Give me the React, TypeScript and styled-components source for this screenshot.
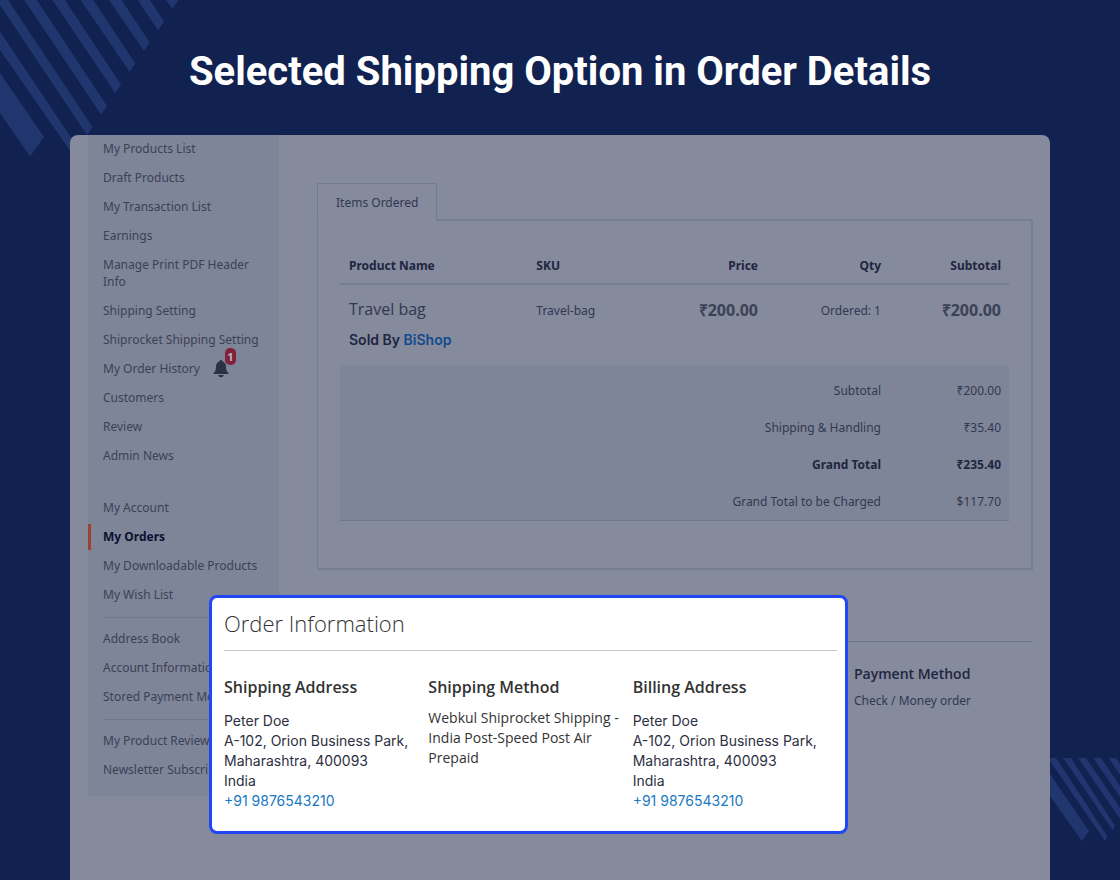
import React from "react";
import styled, { createGlobalStyle, css } from "styled-components";

const GlobalStyle = createGlobalStyle`
  *, *::before, *::after { box-sizing: border-box; }
  body {
    margin: 0;
    background: #112150;
    font-family: "Noto Sans", "Open Sans", sans-serif;
    font-size: 12px;
    line-height: 17px;
  }
  h1, h2, h3, p, ul, address { margin: 0; padding: 0; font-style: normal; }
  ul { list-style: none; }
  a { text-decoration: none; color: inherit; }
`;

const Page = styled.div`
  position: relative;
  display: flex;
  flex-direction: column;
  min-height: 100vh;
  overflow: hidden;
`;

const Stripes = styled.svg<{ $corner: "top" | "bottom" }>`
  position: absolute;
  fill: #21366f;
  ${({ $corner }) =>
    $corner === "top"
      ? css`top: 0; left: 0;`
      : css`bottom: 38px; right: 0;`}
`;

const Title = styled.h1`
  position: relative;
  padding: 48px 24px 39px;
  color: #fff;
  font: 700 40px/48px Roboto, sans-serif;
  text-align: center;
`;

const Panel = styled.main`
  position: relative;
  flex: 1;
  display: flex;
  align-items: flex-start;
  gap: 38px;
  margin: 0 70px;
  padding: 0 17px 84px 18px;
  border-radius: 8px 8px 0 0;
  background: #858a9d;
  color: #323850;
`;

const Sidebar = styled.nav`
  flex: 0 0 191px;
  padding-bottom: 11px;
  background: #7f8598;
`;

const NavList = styled.ul<{ $spaced?: boolean }>`
  margin-top: ${({ $spaced }) => ($spaced ? 23 : 0)}px;
`;

const NavItem = styled.li<{ $active?: boolean }>`
  display: flex;
  align-items: center;
  padding: 5px 15px 7px 12px;
  border-left: 3px solid transparent;
  color: #3b4157;
  ${({ $active }) =>
    $active &&
    css`
      margin: 1px 0 2px;
      padding-top: 4px;
      padding-bottom: 5px;
      border-left-color: #9d4130;
      color: #0c1130;
      font-weight: 700;
    `}
`;

const NavDivider = styled.hr`
  margin: 7px 15px;
  border: 0;
  border-top: 1px solid #72788c;
`;

const Bell = styled.span`
  position: relative;
  display: flex;
  height: 17px;
  margin-left: 13px;
`;

const Badge = styled.span`
  position: absolute;
  top: -12px;
  left: 12px;
  width: 11px;
  border-radius: 5px;
  background: #83213a;
  color: #b3b5c4;
  font-size: 11px;
  font-weight: 700;
  text-align: center;
`;

const Content = styled.div`
  flex: 1;
  min-width: 0;
  padding-top: 48px;
`;

const Tab = styled.button`
  position: relative;
  display: block;
  height: 38px;
  margin-bottom: -2px;
  padding: 0 18px;
  border: 1px solid #757b8f;
  border-bottom: 0;
  background: #858a9d;
  color: #323850;
  font: inherit;
`;

const OrderBox = styled.section`
  height: 351px;
  padding: 32px 22px 0;
  border: 2px solid #787e92;
  border-left-width: 1px;
`;

const Items = styled.table`
  width: 100%;
  table-layout: fixed;
  border-collapse: collapse;

  th, td { padding: 0 8px 0 9px; text-align: left; vertical-align: top; }
`;

const HeadCell = styled.th<{ $width?: string; $end?: boolean }>`
  width: ${({ $width }) => $width || "auto"};
  && {
    padding-top: 4px;
    padding-bottom: 9px;
    border-bottom: 2px solid #787e92;
    text-align: ${({ $end }) => ($end ? "right" : "left")};
  }
  color: #20263f;
`;

const BodyCell = styled.td<{ $end?: boolean }>`
  && {
    height: 81px;
    padding-top: 17px;
    text-align: ${({ $end }) => ($end ? "right" : "left")};
  }
`;

const ProductName = styled.p`
  font-family: "Open Sans", sans-serif;
  font-size: 16px;
  line-height: 15px;
`;

const Seller = styled.p`
  margin-top: 14px;
  color: #20263f;
  font: 600 14px/17px Inter, sans-serif;

  a { color: #114b8e; }
`;

const Price = styled.strong`
  color: #3b4157;
  font-family: "Open Sans", sans-serif;
  font-size: 16px;
`;

const TotalRow = styled.tr<{ $bold?: boolean; $first?: boolean }>`
  background: #7f8598;
  && > * {
    padding-top: ${({ $first }) => ($first ? 17 : 10)}px;
    padding-bottom: 10px;
    text-align: right;
    font-weight: ${({ $bold }) => ($bold ? 700 : 400)};
    color: ${({ $bold }) => ($bold ? "#20263f" : "#323850")};
  }
  &:last-child { border-bottom: 1px solid #6f758a; }
`;

const Payment = styled.section`
  margin-top: 71px;
  padding: 23px 0 0 75%;
  border-top: 1px solid #6f758a;
`;

const PaymentTitle = styled.h3`
  color: #20263f;
  font-family: "Open Sans", sans-serif;
  font-size: 14px;
  font-weight: 600;
  line-height: 17px;
`;

const PaymentText = styled.p`
  margin-top: 10px;
`;

const InfoCard = styled.section`
  position: absolute;
  top: 460px;
  left: 139px;
  right: 202px;
  padding: 11px 8px 20px 12px;
  border: 3px solid #2046f5;
  border-radius: 8px;
  background: #fff;
  color: #333;
  font-family: "Open Sans", sans-serif;
`;

const InfoTitle = styled.h2`
  padding-bottom: 13px;
  border-bottom: 1px solid #c4c4c4;
  font-size: 22px;
  font-weight: 300;
  line-height: 28px;
`;

const InfoGrid = styled.div`
  display: grid;
  grid-template-columns: repeat(3, 1fr);
  padding-top: 25px;
`;

const InfoHeading = styled.h3`
  font-size: 16px;
  font-weight: 600;
  line-height: 22px;
`;

const Address = styled.address`
  margin-top: 13px;
  color: #2d2f42;
  font: 400 14px/20px Inter, sans-serif;
  white-space: nowrap;

  a { color: #1979c3; }
`;

const Method = styled.p`
  margin-top: 10px;
  padding-right: 10px;
  font-size: 14px;
  line-height: 20px;
`;

const sellerLinks = [
  "My Products List",
  "Draft Products",
  "My Transaction List",
  "Earnings",
  "Manage Print PDF Header Info",
  "Shipping Setting",
  "Shiprocket Shipping Setting",
  "My Order History",
  "Customers",
  "Review",
  "Admin News",
];
const accountLinks = ["My Account", "My Orders", "My Downloadable Products", "My Wish List"];
const detailLinks = ["Address Book", "Account Information", "Stored Payment Methods"];
const reviewLinks = ["My Product Reviews", "Newsletter Subscriptions"];

const totals = [
  { label: "Subtotal", value: "₹200.00" },
  { label: "Shipping & Handling", value: "₹35.40" },
  { label: "Grand Total", value: "₹235.40", bold: true },
  { label: "Grand Total to be Charged", value: "$117.70" },
];

function NavGroup({ links, spaced }: { links: string[]; spaced?: boolean }) {
  return (
    <NavList $spaced={spaced}>
      {links.map((label) => (
        <NavItem key={label} $active={label === "My Orders"}>
          <a href="#">{label}</a>
          {label === "My Order History" && (
            <Bell>
              <svg width="16" height="18" viewBox="0 0 16 18" fill="#2b3048" aria-hidden="true">
                <path d="M8 0c.8 0 1.200.5 1.300 1.200C11.700 1.900 13 3.800 13 6.400c0 4 .9 5.400 2.600 6.700V14H.4v-.9C2.100 11.800 3 10.400 3 6.400c0-2.600 1.300-4.500 3.700-5.200C6.800.5 7.200 0 8 0zM5.200 15.100h5.600C10.500 16.500 9.500 17.300 8 17.300s-2.500-.8-2.800-2.200z" />
              </svg>
              <Badge>1</Badge>
            </Bell>
          )}
        </NavItem>
      ))}
    </NavList>
  );
}

function PostalAddress() {
  return (
    <Address>
      Peter Doe
      <br />
      A-102, Orion Business Park,
      <br />
      Maharashtra, 400093
      <br />
      India
      <br />
      <a href="tel:+919876543210">+91 9876543210</a>
    </Address>
  );
}

export default function App() {
  return (
    <Page>
      <GlobalStyle />
      <Stripes $corner="top" width="180" height="160" viewBox="0 0 180 160" aria-hidden="true">
        <path d="M0 73L44 137L30 156.500L0 113ZM0 31.500L78 148L73 155L0 50ZM0 0H8L92.500 127L87 135L0 5ZM24.300 0H36.700L107 106L101 114.500ZM52.300 0H65L121 84.500L115.300 93ZM80.700 0H93.300L135.300 63.500L129.700 72ZM109 0H121.700L149.700 42.500L144 51ZM137.700 0H150L164 21.500L158 30.500ZM166 0H178.500L172.500 9Z" />
      </Stripes>
      <Stripes $corner="bottom" width="70" height="84" viewBox="1050 758 70 84" aria-hidden="true">
        <path d="M1050 774L1089 831L1082 841L1050 796ZM1050 758H1056L1107.500 836.500L1105 841L1050 761ZM1063.300 758H1071L1115 826L1112.500 830ZM1078.300 758H1086L1120 808V819ZM1093.300 758H1101L1120 786V797ZM1108.700 758H1116L1120 764V775Z" />
      </Stripes>

      <Title>Selected Shipping Option in Order Details</Title>

      <Panel>
        <Sidebar>
          <NavGroup links={sellerLinks} />
          <NavGroup links={accountLinks} spaced />
          <NavDivider />
          <NavGroup links={detailLinks} />
          <NavDivider />
          <NavGroup links={reviewLinks} />
        </Sidebar>

        <Content>
          <Tab type="button">Items Ordered</Tab>
          <OrderBox>
            <Items>
              <thead>
                <tr>
                  <HeadCell $width="28%">Product Name</HeadCell>
                  <HeadCell>SKU</HeadCell>
                  <HeadCell $end>Price</HeadCell>
                  <HeadCell $width="123px" $end>Qty</HeadCell>
                  <HeadCell $width="120px" $end>Subtotal</HeadCell>
                </tr>
              </thead>
              <tbody>
                <tr>
                  <BodyCell>
                    <ProductName>Travel bag</ProductName>
                    <Seller>
                      Sold By <a href="#">BiShop</a>
                    </Seller>
                  </BodyCell>
                  <BodyCell>Travel-bag</BodyCell>
                  <BodyCell $end><Price>₹200.00</Price></BodyCell>
                  <BodyCell $end>Ordered: 1</BodyCell>
                  <BodyCell $end><Price>₹200.00</Price></BodyCell>
                </tr>
              </tbody>
              <tfoot>
                {totals.map(({ label, value, bold }, i) => (
                  <TotalRow key={label} $bold={bold} $first={i === 0}>
                    <th colSpan={4} scope="row">{label}</th>
                    <td>{value}</td>
                  </TotalRow>
                ))}
              </tfoot>
            </Items>
          </OrderBox>

          <Payment>
            <PaymentTitle>Payment Method</PaymentTitle>
            <PaymentText>Check / Money order</PaymentText>
          </Payment>
        </Content>

        <InfoCard>
          <InfoTitle>Order Information</InfoTitle>
          <InfoGrid>
            <div>
              <InfoHeading>Shipping Address</InfoHeading>
              <PostalAddress />
            </div>
            <div>
              <InfoHeading>Shipping Method</InfoHeading>
              <Method>Webkul Shiprocket Shipping - India Post-Speed Post Air Prepaid</Method>
            </div>
            <div>
              <InfoHeading>Billing Address</InfoHeading>
              <PostalAddress />
            </div>
          </InfoGrid>
        </InfoCard>
      </Panel>
    </Page>
  );
}
